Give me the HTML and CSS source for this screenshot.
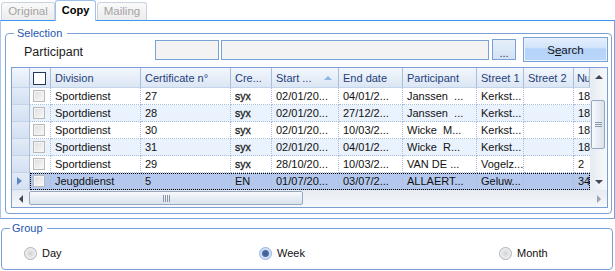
FILE: index.html
```html
<!DOCTYPE html>
<html lang="en">

<head>
    <meta charset="UTF-8">
    <title>Copy</title>
    <link rel="stylesheet" href="styles.css">
</head>

<body>
    <nav class="tabs">
        <div class="tab t-original">Original</div>
        <div class="tab t-copy active">Copy</div>
        <div class="tab t-mailing">Mailing</div>
    </nav>

    <section class="panel">
        <fieldset class="box selection">
            <legend>Selection</legend>
            <div class="search-row">
                <label class="lbl">Participant</label>
                <input class="inp code" type="text">
                <input class="inp name" type="text">
                <button class="dots">...</button>
                <button class="search">S<u>e</u>arch</button>
            </div>

            <div class="grid">
                <div class="grid-top">
                    <div class="table">
                        <div class="row head">
                            <div class="rh"></div>
                            <div class="cells">
                                <span class="cb"><i class="check all"></i></span>
                                <span>Division</span>
                                <span>Certificate n°</span>
                                <span>Cre...</span>
                                <span class="sorted">Start ...<b class="sort-up"></b></span>
                                <span>End date</span>
                                <span>Participant</span>
                                <span>Street 1</span>
                                <span>Street 2</span>
                                <span class="clip">Nu</span>
                            </div>
                        </div>
                        <div class="row">
                            <div class="rh"></div>
                            <div class="cells">
                                <span class="cb"><i class="check"></i></span>
                                <span>Sportdienst</span><span>27</span><span class="cre">syx</span>
                                <span>02/01/20...</span><span>04/01/2...</span><span>Janssen &nbsp;...</span>
                                <span>Kerkst...</span><span></span><span>18</span>
                            </div>
                        </div>
                        <div class="row alt">
                            <div class="rh"></div>
                            <div class="cells">
                                <span class="cb"><i class="check"></i></span>
                                <span>Sportdienst</span><span>28</span><span class="cre">syx</span>
                                <span>02/01/20...</span><span>27/12/2...</span><span>Janssen &nbsp;...</span>
                                <span>Kerkst...</span><span></span><span>18</span>
                            </div>
                        </div>
                        <div class="row">
                            <div class="rh"></div>
                            <div class="cells">
                                <span class="cb"><i class="check"></i></span>
                                <span>Sportdienst</span><span>30</span><span class="cre">syx</span>
                                <span>02/01/20...</span><span>10/03/2...</span><span>Wicke &nbsp;M...</span>
                                <span>Kerkst...</span><span></span><span>18</span>
                            </div>
                        </div>
                        <div class="row alt">
                            <div class="rh"></div>
                            <div class="cells">
                                <span class="cb"><i class="check"></i></span>
                                <span>Sportdienst</span><span>31</span><span class="cre">syx</span>
                                <span>02/01/20...</span><span>04/01/2...</span><span>Wicke &nbsp;R...</span>
                                <span>Kerkst...</span><span></span><span>18</span>
                            </div>
                        </div>
                        <div class="row">
                            <div class="rh"></div>
                            <div class="cells">
                                <span class="cb"><i class="check"></i></span>
                                <span>Sportdienst</span><span>29</span><span class="cre">syx</span>
                                <span>28/10/20...</span><span>10/03/2...</span><span>VAN DE ...</span>
                                <span>Vogelz...</span><span></span><span>2</span>
                            </div>
                        </div>
                        <div class="row sel">
                            <div class="rh"><b class="cur"></b></div>
                            <div class="cells">
                                <span class="cb"><i class="check"></i></span>
                                <span>Jeugddienst</span><span>5</span><span>EN</span>
                                <span>01/07/20...</span><span>03/07/2...</span><span>ALLAERT...</span>
                                <span>Geluw...</span><span></span><span>34</span>
                            </div>
                        </div>
                    </div>

                    <div class="vscroll">
                        <div class="sb-btn"><b class="tri-up"></b></div>
                        <div class="v-track">
                            <div class="v-thumb">
                                <svg width="7" height="5" viewBox="0 0 7 5">
                                    <path d="M0 0.5H7M0 2.5H7M0 4.5H7" stroke="#8a97a8" stroke-width="1" />
                                </svg>
                            </div>
                        </div>
                        <div class="sb-btn"><b class="tri-down"></b></div>
                    </div>
                </div>

                <div class="hscroll">
                    <div class="sb-btn"><b class="tri-left"></b></div>
                    <div class="h-track">
                        <div class="h-thumb">
                            <svg width="7" height="7" viewBox="0 0 7 7">
                                <path d="M0.5 0V7M2.5 0V7M4.5 0V7M6.5 0V7" stroke="#8a97a8" stroke-width="1" />
                            </svg>
                        </div>
                    </div>
                    <div class="sb-btn"><b class="tri-right"></b></div>
                </div>
            </div>
        </fieldset>
    </section>

    <fieldset class="box group">
        <legend>Group</legend>
        <div class="radios">
            <label class="opt"><i class="radio"></i>Day</label>
            <label class="opt"><i class="radio on"></i>Week</label>
            <label class="opt"><i class="radio"></i>Month</label>
        </div>
    </fieldset>
</body>

</html>
```

FILE: styles.css
```css
* {
    margin: 0;
    box-sizing: border-box;
}

body {
    width: 615px;
    height: 271px;
    overflow: hidden;
    font-family: "Liberation Sans", Arial, sans-serif;
    font-size: 11px;
    color: #111;
    background: #fff;
}

/* tabs */

.tabs {
    display: flex;
    align-items: flex-end;
    height: 20px;
    padding-left: 1px;
}

.tab {
    height: 18px;
    line-height: 17px;
    text-align: center;
    color: #a3a3a3;
    font-size: 11.5px;
    background: linear-gradient(#fafafa, #ececec);
    border: 1px solid #c9d3e0;
    border-bottom: none;
    border-radius: 3px 3px 0 0;
}

.t-original {
    width: 54px;
}

.t-copy {
    width: 41px;
}

.t-mailing {
    width: 50px;
    margin-left: 1px;
}

.tab.active {
    position: relative;
    z-index: 1;
    height: 21px;
    margin-bottom: -1px;
    line-height: 19px;
    font-size: 11px;
    font-weight: bold;
    color: #000;
    background: #fff;
    border-color: #9fc0ea;
}

.panel {
    height: 199px;
    border: 1px solid #7aa3da;
    border-top-color: #3d96f5;
    border-left-color: #a9c6ee;
    padding: 6px 2px 4px 4px;
}

/* group boxes */

.box {
    border: 1px solid #7aa0d6;
    border-radius: 4px;
    min-width: 0;
}

.box legend {
    font-size: 11px;
    line-height: 12px;
    color: #1e56b0;
}

.selection {
    height: 187px;
    padding: 0 3px 5px 5px;
}

.selection legend {
    margin-left: 3px;
    padding: 0 5px 0 3px;
}

.search-row {
    display: flex;
    align-items: flex-start;
    height: 23px;
}

.lbl {
    width: 131px;
    margin-left: 13px;
    padding-top: 6px;
    font-size: 12.5px;
    color: #1b1b1b;
}

.inp {
    height: 20px;
    margin-top: 1px;
    background: #f3f3f3;
    border: 1px solid #7aa0d6;
    outline: none;
}

.code {
    width: 64px;
}

.name {
    width: 268px;
    margin-left: 2px;
}

.dots {
    width: 24px;
    height: 21px;
    margin-left: 3px;
    padding: 6px 0 0;
    font: 11px "Liberation Sans", Arial, sans-serif;
    color: #333;
    background: linear-gradient(#e6eff9, #d2e2f6);
    border: 1px solid #7aa0d6;
}

.search {
    width: 85px;
    height: 25px;
    margin: -2px 0 0 7px;
    font: 11.5px "Liberation Sans", Arial, sans-serif;
    color: #111;
    background: linear-gradient(#e4effc 0, #d3e5fb 40%, #b5d3f8 48%, #b9d7fa 100%);
    border: 1px solid #7aa0d6;
    box-shadow: inset 0 0 0 1px #e9f2fd;
}

/* data grid */

.grid {
    height: 141px;
    margin-top: 5px;
    border: 1px solid #7b9fd4;
    background: #fff;
}

.grid-top {
    display: flex;
    height: 122px;
}

.table {
    width: 578px;
}

.row {
    display: flex;
    height: 17px;
}

.rh {
    width: 18px;
    flex: none;
    position: relative;
    background: linear-gradient(#e3ebf6, #d3e0f2);
    border-right: 1px solid #a9bfdd;
    border-bottom: 1px solid #c2d3ea;
}

.cells {
    flex: 1;
    display: grid;
    grid-template-columns: 21px 90px 90px 41px 67px 64px 74px 47px 50px 16px;
}

.cells span {
    display: block;
    overflow: hidden;
    white-space: nowrap;
    padding-left: 4px;
    line-height: 16px;
    border-right: 1px dotted #a8bedc;
    border-bottom: 1px dotted #a8bedc;
}

.cells span:last-child {
    border-right: none;
}

.cells .clip {
    padding-left: 3px;
    letter-spacing: -0.5px;
}

.cells .cre {
    font-size: 10.5px;
    color: #1a1a1a;
    -webkit-text-stroke: 0.3px #1a1a1a;
}

.row.alt .cells span {
    background: #e9f2fd;
}

.row.sel .cells {
    outline: 1px dotted #000;
    outline-offset: -1px;
}

.row.sel .cells span {
    background: #b3c8ec;
}

.cells .cb {
    padding-left: 3px;
}

.check {
    display: block;
    width: 12px;
    height: 12px;
    margin-top: 2px;
    border: 1px solid #b9b9b9;
    background: linear-gradient(135deg, #dedede, #f9f9f9);
    box-shadow: inset 0 0 0 1px #f4f4f4;
}

.check.all {
    width: 13px;
    height: 13px;
    margin-top: 3px;
    border-color: #24395a;
    background: #fff;
    box-shadow: none;
}

.row.head {
    height: 20px;
}

.head .rh,
.head .cells span {
    background: linear-gradient(#f3f7fc, #dbe6f4);
    border-bottom: 1px solid #c4d4ea;
}

.head .cells span {
    line-height: 19px;
    padding-top: 1px;
    color: #1f3f7c;
    border-right: 1px solid #a8bedd;
}

.head .sorted {
    display: flex;
    justify-content: space-between;
    align-items: center;
    padding-right: 6px;
}

.sort-up {
    width: 0;
    height: 0;
    border-left: 4px solid transparent;
    border-right: 4px solid transparent;
    border-bottom: 4px solid #8fb6e6;
}

.cur {
    position: absolute;
    left: 5px;
    top: 4px;
    width: 0;
    height: 0;
    border-top: 4px solid transparent;
    border-bottom: 4px solid transparent;
    border-left: 5px solid #5f86c4;
}

/* scrollbars */

.vscroll {
    width: 17px;
    display: flex;
    flex-direction: column;
    background: linear-gradient(to right, #e6ebf2, #f6f8fb);
}

.sb-btn {
    width: 17px;
    height: 17px;
    flex: none;
    display: flex;
    align-items: center;
    justify-content: center;
}

.v-track {
    flex: 1;
    padding: 15px 2px 0 1px;
}

.v-thumb {
    height: 49px;
    display: flex;
    align-items: center;
    justify-content: center;
    border: 1px solid #97a7bd;
    border-radius: 2px;
    background: linear-gradient(to right, #f7f9fc, #dae2ed);
}

.tri-up,
.tri-down {
    width: 0;
    height: 0;
    border-left: 4px solid transparent;
    border-right: 4px solid transparent;
}

.tri-up {
    border-bottom: 4px solid #3d4958;
}

.tri-down {
    border-top: 4px solid #3d4958;
}

.tri-left,
.tri-right {
    width: 0;
    height: 0;
    border-top: 4px solid transparent;
    border-bottom: 4px solid transparent;
}

.tri-left {
    border-right: 4px solid #3d4958;
}

.tri-right {
    border-left: 4px solid #9aa3ae;
}

.hscroll {
    display: flex;
    height: 17px;
    background: linear-gradient(#e6ebf2, #f6f8fb);
}

.h-track {
    flex: 1;
    padding: 1px 0 2px;
}

.h-thumb {
    width: 274px;
    height: 14px;
    display: flex;
    align-items: center;
    justify-content: center;
    border: 1px solid #97a7bd;
    border-radius: 2px;
    background: linear-gradient(#f7f9fc, #dae2ed);
}

/* group */

.group {
    height: 48px;
    margin: 3px 2px 0 1px;
    padding: 12px 8px 0;
}

.group legend {
    padding: 0 4px 0 2px;
}

.radios {
    display: grid;
    grid-template-columns: 235px 240px 1fr;
    padding-left: 14px;
}

.opt {
    display: flex;
    align-items: center;
    gap: 5px;
    height: 14px;
    color: #111;
}

.radio {
    width: 13px;
    height: 13px;
    border-radius: 50%;
    border: 1px solid #aab3bf;
    background: radial-gradient(circle, #d2d2d2 0, #e6e6e6 45%, #fafafa 100%);
}

.radio.on {
    border-color: #8fb0dd;
    background: radial-gradient(circle, #3c5d91 0, #4a6ea6 3px, #c9dbf3 4px, #eef4fc 100%);
}
```
